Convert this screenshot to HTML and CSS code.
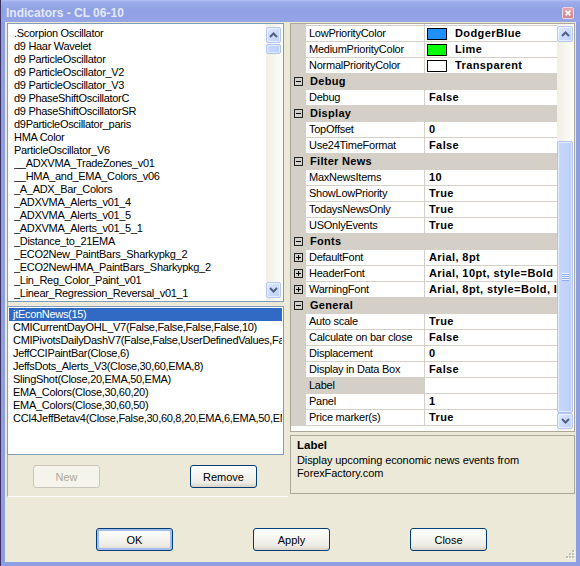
FILE: index.html
```html
<!DOCTYPE html>
<html>
<head>
<meta charset="utf-8">
<link rel="stylesheet" href="styles.css">
</head>
<body>
<div class="window">
  <div class="titlebar">
    <span class="title">Indicators - CL 06-10</span>
    <span class="close"><svg width="10" height="10" viewBox="0 0 10 10"><path d="M2 2 L8 8 M8 2 L2 8" stroke="#fff" stroke-width="2" fill="none"/></svg></span>
  </div>
  <div class="frame">
    <div class="main">
      <div class="left">
        <div class="listbox list-top">
          <div class="items">
            <div class="item">.Scorpion Oscillator</div>
            <div class="item">d9 Haar Wavelet</div>
            <div class="item">d9 ParticleOscillator</div>
            <div class="item">d9 ParticleOscillator_V2</div>
            <div class="item">d9 ParticleOscillator_V3</div>
            <div class="item">d9 PhaseShiftOscillatorC</div>
            <div class="item">d9 PhaseShiftOscillatorSR</div>
            <div class="item">d9ParticleOscillator_paris</div>
            <div class="item">HMA Color</div>
            <div class="item">ParticleOscillator_V6</div>
            <div class="item">__ADXVMA_TradeZones_v01</div>
            <div class="item">__HMA_and_EMA_Colors_v06</div>
            <div class="item">_A_ADX_Bar_Colors</div>
            <div class="item">_ADXVMA_Alerts_v01_4</div>
            <div class="item">_ADXVMA_Alerts_v01_5</div>
            <div class="item">_ADXVMA_Alerts_v01_5_1</div>
            <div class="item">_Distance_to_21EMA</div>
            <div class="item">_ECO2New_PaintBars_Sharkypkg_2</div>
            <div class="item">_ECO2NewHMA_PaintBars_Sharkypkg_2</div>
            <div class="item">_Lin_Reg_Color_Paint_v01</div>
            <div class="item">_Linear_Regression_Reversal_v01_1</div>
          </div>
          <div class="vscroll small">
            <div class="sbtn"><svg width="9" height="6" viewBox="0 0 9 6"><path d="M1 5 L4.5 1.5 L8 5" fill="none" stroke="#4d6185" stroke-width="2"/></svg></div>
            <div class="thumb thumb-small"></div>
            <div class="spacer"></div>
            <div class="sbtn"><svg width="9" height="6" viewBox="0 0 9 6"><path d="M1 1 L4.5 4.5 L8 1" fill="none" stroke="#4d6185" stroke-width="2"/></svg></div>
          </div>
        </div>
        <div class="listbox list-bottom">
          <div class="item sel">jtEconNews(15)</div>
          <div class="item">CMICurrentDayOHL_V7(False,False,False,False,10)</div>
          <div class="item">CMIPivotsDailyDashV7(False,False,UserDefinedValues,False)</div>
          <div class="item">JeffCCIPaintBar(Close,6)</div>
          <div class="item">JeffsDots_Alerts_V3(Close,30,60,EMA,8)</div>
          <div class="item">SlingShot(Close,20,EMA,50,EMA)</div>
          <div class="item">EMA_Colors(Close,30,60,20)</div>
          <div class="item">EMA_Colors(Close,30,60,50)</div>
          <div class="item">CCI4JeffBetav4(Close,False,30,60,8,20,EMA,6,EMA,50,EMA)</div>
        </div>
        <div class="leftbtns">
          <button class="btn small-btn" disabled>New</button>
          <button class="btn small-btn">Remove</button>
        </div>
      </div>
      <div class="right">
        <div class="grid">
          <div class="rows">
            <div class="prow spacer-row"><span class="g"></span><span class="n"></span><span class="v"></span></div>
            <div class="prow"><span class="g"></span><span class="n">LowPriorityColor</span><span class="v"><i class="sw sw-blue"></i>DodgerBlue</span></div>
            <div class="prow"><span class="g"></span><span class="n">MediumPriorityColor</span><span class="v"><i class="sw sw-lime"></i>Lime</span></div>
            <div class="prow"><span class="g"></span><span class="n">NormalPriorityColor</span><span class="v"><i class="sw sw-white"></i>Transparent</span></div>
            <div class="cat"><span class="g"><i class="exp"></i></span><span class="cl">Debug</span></div>
            <div class="prow"><span class="g"></span><span class="n">Debug</span><span class="v">False</span></div>
            <div class="cat"><span class="g"><i class="exp"></i></span><span class="cl">Display</span></div>
            <div class="prow"><span class="g"></span><span class="n">TopOffset</span><span class="v">0</span></div>
            <div class="prow"><span class="g"></span><span class="n">Use24TimeFormat</span><span class="v">False</span></div>
            <div class="cat"><span class="g"><i class="exp"></i></span><span class="cl">Filter News</span></div>
            <div class="prow"><span class="g"></span><span class="n">MaxNewsItems</span><span class="v">10</span></div>
            <div class="prow"><span class="g"></span><span class="n">ShowLowPriority</span><span class="v">True</span></div>
            <div class="prow"><span class="g"></span><span class="n">TodaysNewsOnly</span><span class="v">True</span></div>
            <div class="prow"><span class="g"></span><span class="n">USOnlyEvents</span><span class="v">True</span></div>
            <div class="cat"><span class="g"><i class="exp"></i></span><span class="cl">Fonts</span></div>
            <div class="prow"><span class="g"><i class="exp plus"></i></span><span class="n">DefaultFont</span><span class="v">Arial, 8pt</span></div>
            <div class="prow"><span class="g"><i class="exp plus"></i></span><span class="n">HeaderFont</span><span class="v">Arial, 10pt, style=Bold</span></div>
            <div class="prow"><span class="g"><i class="exp plus"></i></span><span class="n">WarningFont</span><span class="v">Arial, 8pt, style=Bold, Italic</span></div>
            <div class="cat"><span class="g"><i class="exp"></i></span><span class="cl">General</span></div>
            <div class="prow"><span class="g"></span><span class="n">Auto scale</span><span class="v">True</span></div>
            <div class="prow"><span class="g"></span><span class="n">Calculate on bar close</span><span class="v">False</span></div>
            <div class="prow"><span class="g"></span><span class="n">Displacement</span><span class="v">0</span></div>
            <div class="prow"><span class="g"></span><span class="n">Display in Data Box</span><span class="v">False</span></div>
            <div class="prow"><span class="g"></span><span class="n selname">Label</span><span class="v"></span></div>
            <div class="prow"><span class="g"></span><span class="n">Panel</span><span class="v">1</span></div>
            <div class="prow"><span class="g"></span><span class="n">Price marker(s)</span><span class="v">True</span></div>
            <div class="filler"></div>
          </div>
          <div class="vscroll big">
            <div class="sbtn"><svg width="9" height="6" viewBox="0 0 9 6"><path d="M1 5 L4.5 1.5 L8 5" fill="none" stroke="#4d6185" stroke-width="2"/></svg></div>
            <div class="spacer big-gap"></div>
            <div class="thumb thumb-big"><span class="grip"></span></div>
            <div class="sbtn"><svg width="9" height="6" viewBox="0 0 9 6"><path d="M1 1 L4.5 4.5 L8 1" fill="none" stroke="#4d6185" stroke-width="2"/></svg></div>
          </div>
        </div>
        <div class="help">
          <b>Label</b>
          <p>Display upcoming economic news events from<br>ForexFactory.com</p>
        </div>
      </div>
    </div>
    <div class="footer">
      <button class="btn wide-btn default">OK</button>
      <button class="btn wide-btn">Apply</button>
      <button class="btn wide-btn">Close</button>
    </div>
    <svg class="grip-corner" width="11" height="11" viewBox="0 0 11 11">
      <g fill="#fff"><rect x="9" y="1" width="2" height="2"/><rect x="6" y="4" width="2" height="2"/><rect x="9" y="4" width="2" height="2"/><rect x="3" y="7" width="2" height="2"/><rect x="6" y="7" width="2" height="2"/><rect x="9" y="7" width="2" height="2"/></g>
      <g fill="#c0bda9"><rect x="8" y="0" width="2" height="2"/><rect x="5" y="3" width="2" height="2"/><rect x="8" y="3" width="2" height="2"/><rect x="2" y="6" width="2" height="2"/><rect x="5" y="6" width="2" height="2"/><rect x="8" y="6" width="2" height="2"/></g>
    </svg>
  </div>
</div>
</body>
</html>
```
FILE: styles.css
```css
html, body {
  margin: 0;
  padding: 0;
}
body {
  background: #3b3160;
  font-family: "Liberation Sans", Arial, sans-serif;
  font-size: 11px;
  color: #000;
}
.window {
  margin-left: 1px;
  width: 579px;
  height: 566px;
  display: flex;
  flex-direction: column;
}
.titlebar {
  height: 22px;
  flex: none;
  box-sizing: border-box;
  padding: 4px 6px 0 5px;
  display: flex;
  align-items: center;
  background: linear-gradient(#b3c1f1 0, #9cacea 2px, #8fa0e4 50%, #95a5e6 100%);
}
.title {
  flex: 1;
  color: #e2e8f8;
  font-weight: bold;
  font-size: 12px;
}
.close {
  width: 12px;
  height: 12px;
  box-sizing: border-box;
  border: 1px solid #f0d6dc;
  border-radius: 2px;
  background: linear-gradient(#e4a8b1, #cf8591);
  display: flex;
  align-items: center;
  justify-content: center;
}
.close svg { width: 8px; height: 8px; }
.frame {
  flex: 1;
  position: relative;
  border: 4px solid #8d9ee3;
  border-top: 0;
  background: #ece9d8;
  padding: 1px 1px 0 2px;
  display: flex;
  flex-direction: column;
}
.main {
  display: flex;
  gap: 2px;
  height: 474px;
  flex: none;
}
.left {
  width: 281px;
  box-sizing: border-box;
  border-left: 1px solid #aca899;
  border-bottom: 1px solid #fff;
  display: flex;
  flex-direction: column;
}
.listbox {
  border: 1px solid #7f9db9;
  background: #fff;
  box-sizing: border-box;
  width: 277px;
  margin-left: -1px;
  overflow: hidden;
}
.item {
  height: 13px;
  line-height: 13px;
  white-space: nowrap;
  overflow: hidden;
  letter-spacing: -0.3px;
}
.list-top {
  height: 279px;
  display: flex;
}
.list-top .items {
  flex: 1;
  padding: 3px 0 0 6px;
  overflow: hidden;
}
.list-bottom {
  height: 149px;
  margin-top: 4px;
  padding: 1px;
}
.list-bottom .item {
  padding-left: 4px;
}
.item.sel {
  background: #316ac5;
  color: #fff;
}
.vscroll {
  flex: none;
  width: 17px;
  box-sizing: border-box;
  display: flex;
  flex-direction: column;
  background: linear-gradient(to right, #f1efe5, #fdfdf9);
}
.vscroll.small {
  padding: 3px 2px 3px 0;
}
.vscroll.big {
  padding: 2px 1px 2px 0;
}
.sbtn {
  height: 16px;
  flex: none;
  box-sizing: border-box;
  border: 1px solid #b4c7f2;
  border-radius: 2px;
  background: linear-gradient(135deg, #dfe8fe, #bccff9);
  box-shadow: inset 0 0 0 1px rgba(255,255,255,0.55);
  display: flex;
  align-items: center;
  justify-content: center;
}
.thumb {
  flex: none;
  box-sizing: border-box;
  border: 1px solid #b0c4f2;
  border-radius: 2px;
  background: linear-gradient(to right, #c9d8fc, #bccffa);
  box-shadow: inset 0 0 0 1px rgba(255,255,255,0.5);
  display: flex;
  align-items: center;
  justify-content: center;
}
.thumb-small {
  height: 10px;
  margin-top: 1px;
}
.thumb-big {
  height: 272px;
}
.grip {
  width: 7px;
  height: 8px;
  background: repeating-linear-gradient(#eef3ff 0, #eef3ff 1px, #8eaaf0 1px, #8eaaf0 2px);
}
.spacer { flex: 1; }
.big-gap { flex: none; height: 99px; }
.leftbtns {
  display: flex;
  gap: 90px;
  margin-top: 10px;
  padding-left: 25px;
}
.btn {
  box-sizing: border-box;
  height: 23px;
  padding: 0;
  border: 1px solid #003c74;
  border-radius: 3px;
  background: linear-gradient(#ffffff, #f5f4ef 45%, #ecebe4 80%, #d8d2c6);
  font-family: "Liberation Sans", Arial, sans-serif;
  font-size: 11px;
  color: #000;
}
.btn:disabled {
  border-color: #c9c7ba;
  color: #aca899;
  background: #f5f4ea;
}
.small-btn { width: 67px; }
.wide-btn { width: 77px; }
.btn.default {
  box-shadow: inset 0 0 0 2px #a2bdee;
}
.right {
  width: 285px;
  display: flex;
  flex-direction: column;
  gap: 3px;
}
.grid {
  height: 409px;
  box-sizing: border-box;
  border: 1px solid #aca899;
  background: #fff;
  display: flex;
}
.rows {
  width: 266px;
  display: flex;
  flex-direction: column;
  gap: 1px;
  background: #d4d0c8;
  overflow: hidden;
}
.prow {
  display: grid;
  grid-template-columns: 15px 119px 132px;
  height: 15px;
  line-height: 15px;
  flex: none;
}
.spacer-row { height: 1px; }
.g {
  background: #d4d0c8;
  position: relative;
}
.n {
  background: #fff;
  box-sizing: border-box;
  border-right: 1px solid #d4d0c8;
  padding-left: 3px;
  white-space: nowrap;
  overflow: hidden;
  letter-spacing: -0.25px;
}
.n.selname {
  background: #d4d0c8;
}
.v {
  background: #fff;
  padding-left: 4px;
  font-weight: bold;
  letter-spacing: 0.4px;
  white-space: nowrap;
  overflow: hidden;
  display: flex;
  align-items: center;
}
.sw {
  display: inline-block;
  width: 20px;
  height: 12px;
  box-sizing: border-box;
  border: 1px solid #000;
  margin: 0 8px 0 -2px;
  flex: none;
}
.sw-blue { background: #1e90ff; }
.sw-lime { background: #00ff00; }
.sw-white { background: #fff; }
.cat {
  display: grid;
  grid-template-columns: 15px 251px;
  height: 15px;
  line-height: 15px;
  background: #d4d0c8;
  font-weight: bold;
  flex: none;
}
.cl {
  padding-left: 4px;
  letter-spacing: 0.3px;
}
.exp {
  position: absolute;
  left: 3px;
  top: 3px;
  width: 9px;
  height: 9px;
  box-sizing: border-box;
  border: 1px solid #222;
}
.exp::before {
  content: "";
  position: absolute;
  left: 1px;
  top: 3px;
  width: 5px;
  height: 1px;
  background: #000;
}
.exp.plus::after {
  content: "";
  position: absolute;
  left: 3px;
  top: 1px;
  width: 1px;
  height: 5px;
  background: #000;
}
.filler {
  flex: 1;
  background: #fff;
}
.help {
  height: 59px;
  box-sizing: border-box;
  border: 1px solid #aca899;
  padding: 3px 6px;
}
.help b {
  display: block;
  line-height: 13px;
  margin-bottom: 2px;
  font-size: 11.5px;
}
.help p {
  margin: 0;
  line-height: 13px;
  letter-spacing: -0.1px;
}
.footer {
  display: flex;
  gap: 80px;
  padding: 31px 0 0 89px;
}
.grip-corner {
  position: absolute;
  right: 1px;
  bottom: 1px;
}
```
